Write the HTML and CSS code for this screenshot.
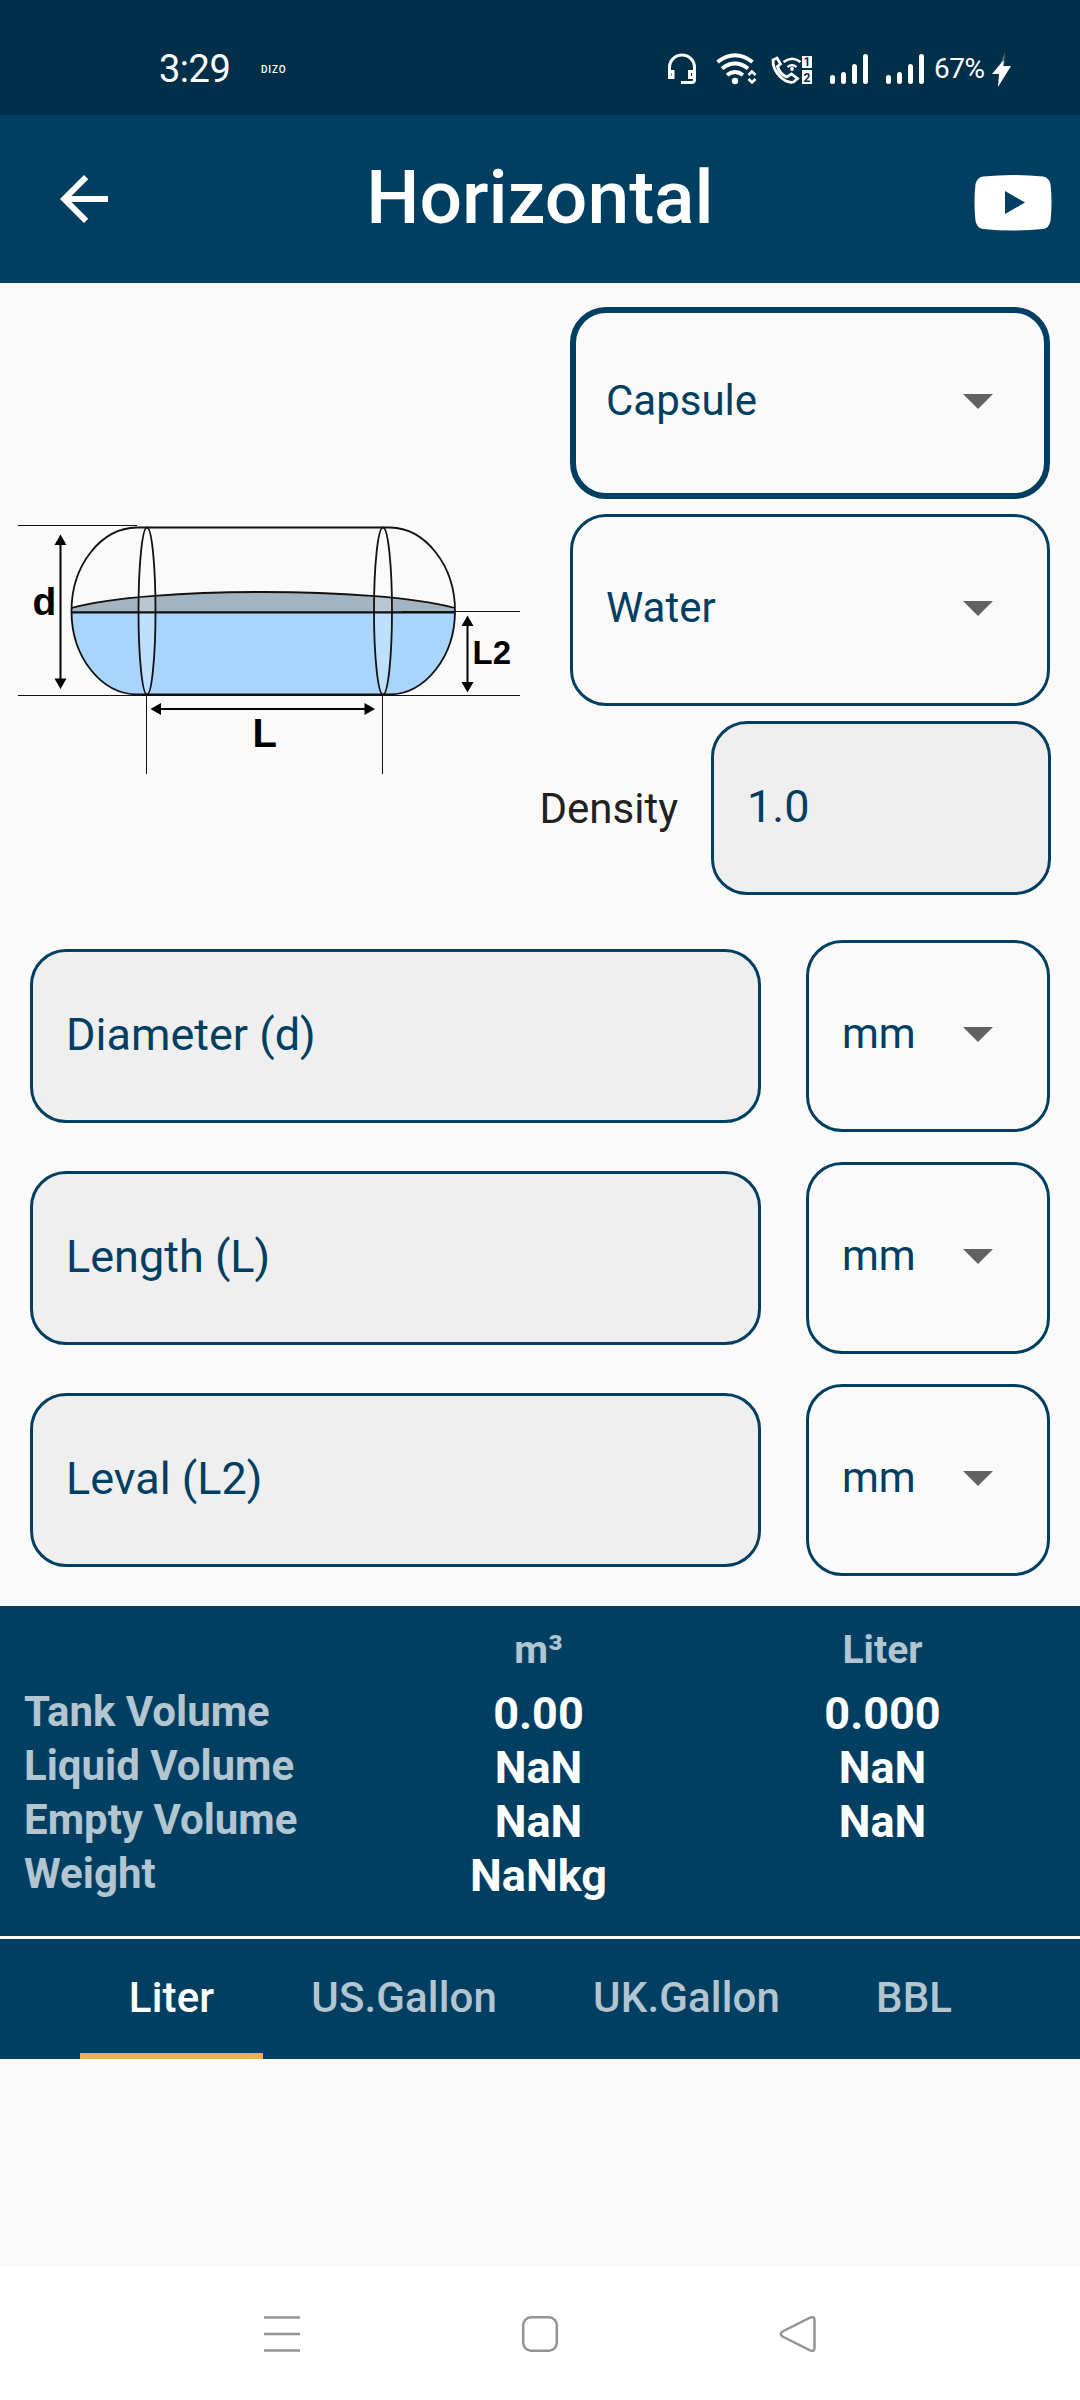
FILE: index.html
```html
<!DOCTYPE html>
<html lang="en">
<head>
    <meta charset="UTF-8">
    <meta name="viewport" content="width=device-width, initial-scale=1.0">
    <title>Horizontal Tank Calculator</title>
    <link rel="stylesheet" href="styles.css">
</head>
<body>
    <div class="status-bar">
        <span class="time">3:29</span>
        <span class="brand">DIZO</span>
        <!-- headset, wifi, call and signal icons -->
        <svg class="status-icons" width="264" height="40" viewBox="664 50 264 40">
            <g fill="none" stroke="#fff" stroke-width="3">
                <path d="M668.5 76V67.500a12.500 12.500 0 0 1 25 0V80q0 2.500-3 2.500H680"/>
                <rect x="668.500" y="71.500" width="3.500" height="6"/>
                <rect x="688.500" y="71.500" width="4" height="6"/>
            </g>
            <g fill="none" stroke="#fff" stroke-width="4">
                <path d="M716.500 62q17.500-13.500 35 0"/>
                <path d="M721 68.500q13-10 26 0"/>
                <path d="M726 75q8-6 16 0"/>
                <path d="M747.500 75l3.500-3.500 3.500 3.500M747.500 79l3.500 3.500 3.500-3.500" stroke-width="2.600"/>
            </g>
            <circle cx="734" cy="81" r="3.200" fill="#fff"/>
            <g fill="none" stroke="#fff" stroke-width="2.800">
                <path d="M772 60l4-2 3.500 6-3 2.500q2 7 9 10.500l5-3 6 4.500-4 3.500q-6 1.500-13-5-8-8-7.500-17z"/>
                <path d="M782.500 62q9-6.500 17 0M786.500 67q4.500-3.500 9 0" stroke-width="2.500"/>
            </g>
            <circle cx="791" cy="69" r="1.900" fill="#fff"/>
            <rect x="801" y="56" width="10" height="12" fill="#fff"/>
            <rect x="801" y="70" width="10" height="14" fill="#fff"/>
            <text x="806" y="66" class="sim">1</text>
            <text x="806" y="81.500" class="sim">2</text>
            <g stroke="#fff" stroke-width="5" stroke-linecap="round">
                <path d="M831.500 77.500V81.500M842.500 74.500V81.500M853.500 66.500V81.500M864.500 56.500V81.500"/>
                <path d="M887.500 77.500V81.500M898.500 74.500V81.500M909.500 66.500V81.500M920.500 56.500V81.500"/>
            </g>
        </svg>
        <span class="battery">67%</span>
        <svg class="bolt" width="20" height="36" viewBox="0 0 20 36">
            <path d="M13 0L8 14H12z" fill="#fff" opacity=".35"/>
            <path d="M10 10L0 22H7L6 35L19 14H11L12 9z" fill="#fff"/>
        </svg>
    </div>

    <div class="app-bar">
        <svg class="back" width="72" height="72" viewBox="0 0 24 24">
            <path d="M20 11H7.830l5.590-5.590L12 4l-8 8 8 8 1.410-1.410L7.830 13H20v-2z" fill="#fff"/>
        </svg>
        <h1>Horizontal</h1>
        <svg class="video" width="78" height="57" viewBox="0 0 78 57">
            <path d="M9 2.500Q39-.5 69 2.500Q75 3.500 76.500 10Q78.500 28 76.500 47Q75 54 69 55Q39 58 9 55Q3 54 1.500 47Q-.5 28 1.500 10Q3 3.500 9 2.500z" fill="#fff"/>
            <path d="M31 17v23l20-11.500z" fill="#003f62"/>
        </svg>
    </div>

    <div class="shape">
        <svg class="tank" width="540" height="260" viewBox="0 520 540 260">
            <path d="M71.500 608C110 597 190 592 263 592S415 597 455 608V612H71.500z" fill="#a2b3c1"/>
            <path d="M71.500 612H455C454 660 425 694 390 694.500H137C101 694 72 660 71.500 612z" fill="#a9d5fd"/>
            <ellipse cx="147" cy="611" rx="8.500" ry="83.500" fill="#fff" fill-opacity=".25"/>
            <ellipse cx="383" cy="611" rx="9" ry="83.500" fill="#fff" fill-opacity=".25"/>
            <g fill="none" stroke="#111" stroke-width="1.800">
                <path d="M137 527.500H390C425 528 455 565 455 611C455 657 425 694 390 694.500H137C101 694 71.500 657 71.500 611C71.500 565 101 528 137 527.500z"/>
                <path d="M71.500 608C110 597 190 592 263 592S415 597 455 608"/>
                <path d="M71.500 612.300H455" stroke-width="2.200"/>
                <ellipse cx="147" cy="611" rx="8.500" ry="83.500"/>
                <ellipse cx="383" cy="611" rx="9" ry="83.500"/>
            </g>
            <!-- dimension lines -->
            <g fill="none" stroke="#111" stroke-width="1">
                <path d="M18 525.500H137M402 611.500H520M18 695.500H520M146.500 695V774M382.500 695V774"/>
            </g>
            <path d="M60.500 540V684M467.500 622V686M156 709H370" stroke="#000" stroke-width="2"/>
            <path d="M60.500 534.500l6 10.500h-12zM60.500 689l6-10.500h-12zM467.500 615.500l6 10.500h-12zM467.500 692.500l6-10.500h-12zM150.500 709l10.500-6v12zM375 709l-10.500-6v12z"/>
            <text x="32.500" y="615" font-size="39">d</text>
            <text x="252.500" y="746.500" font-size="40">L</text>
            <text x="472.500" y="663.500" font-size="33">L2</text>
        </svg>
        <div class="options">
            <div class="select focused"><span>Capsule</span><i class="caret"></i></div>
            <div class="select"><span>Water</span><i class="caret"></i></div>
            <div class="density">
                <label>Density</label>
                <div class="input">1.0</div>
            </div>
        </div>
    </div>

    <div class="fields">
        <div class="field">
            <div class="input">Diameter (d)</div>
            <div class="select"><span>mm</span><i class="caret"></i></div>
        </div>
        <div class="field">
            <div class="input">Length (L)</div>
            <div class="select"><span>mm</span><i class="caret"></i></div>
        </div>
        <div class="field">
            <div class="input">Leval (L2)</div>
            <div class="select"><span>mm</span><i class="caret"></i></div>
        </div>
    </div>

    <div class="results">
        <span></span><span class="unit">m³</span><span class="unit">Liter</span>
        <span class="name">Tank Volume</span><span class="value">0.00</span><span class="value">0.000</span>
        <span class="name">Liquid Volume</span><span class="value">NaN</span><span class="value">NaN</span>
        <span class="name">Empty Volume</span><span class="value">NaN</span><span class="value">NaN</span>
        <span class="name">Weight</span><span class="value">NaNkg</span>
    </div>

    <div class="tabs">
        <span class="tab active">Liter</span>
        <span class="tab">US.Gallon</span>
        <span class="tab">UK.Gallon</span>
        <span class="tab">BBL</span>
    </div>

    <div class="nav-bar">
        <svg width="38" height="38" viewBox="0 0 38 38">
            <path d="M1 2.500H37M1 19H37M1 35.500H37"/>
        </svg>
        <svg width="38" height="38" viewBox="0 0 38 38">
            <rect x="2.200" y="2.200" width="33.600" height="33.600" rx="8"/>
        </svg>
        <svg width="38" height="38" viewBox="0 0 38 38">
            <path d="M3.500 16.500L31 2.600Q35.500 1 35.500 5V33Q35.500 37 31 35.400L3.500 21.500Q0 19 3.500 16.500z"/>
        </svg>
    </div>
</body>
</html>
```
FILE: styles.css
```css
* {
    box-sizing: border-box;
}
body {
    margin: 0;
    width: 1080px;
    height: 2400px;
    display: flex;
    flex-direction: column;
    background-color: #fafafa;
    color: #003f62;
    font-family: Roboto, "Liberation Sans", sans-serif;
}
svg {
    display: block;
    flex: none;
}
.status-bar {
    height: 115px;
    padding: 24px 68px 0 159px;
    display: flex;
    align-items: center;
    background-color: #002f49;
    color: #fff;
}
.time {
    width: 102px;
    padding-bottom: 2px;
    font-size: 38px;
    letter-spacing: -0.5px;
}
.brand {
    flex: 1;
    font-size: 10px;
    font-weight: 500;
    letter-spacing: 0.8px;
}
.status-icons {
    margin-right: 5px;
}
.sim {
    font-size: 12px;
    font-weight: 700;
    fill: #002f49;
    text-anchor: middle;
}
.battery {
    width: 58px;
    padding-bottom: 3px;
    font-family: Roboto, sans-serif;
    font-size: 28px;
    letter-spacing: -0.5px;
}
.app-bar {
    height: 168px;
    padding: 0 28px 0 48px;
    display: flex;
    align-items: center;
    justify-content: space-between;
    background-color: #003f62;
    color: #fff;
}
.app-bar h1 {
    margin: -4px 14px 0 0;
    font-size: 75px;
    font-weight: 500;
}
.video {
    margin-top: 7px;
}
.shape {
    height: 612px;
    padding: 24px 29px 0 0;
    display: flex;
}
.tank {
    margin-top: 213px;
    margin-right: -40px;
    font-family: "Liberation Sans", sans-serif;
    font-weight: 700;
}
.options {
    flex: 1;
    display: flex;
    flex-direction: column;
    align-items: flex-end;
    gap: 15px;
}
.select {
    height: 192px;
    padding: 0 54px 0 33px;
    display: flex;
    align-items: center;
    justify-content: space-between;
    border: 3px solid #003f62;
    border-radius: 36px;
    font-size: 42px;
}
.options .select {
    width: 480px;
    margin-right: 1px;
}
.focused {
    padding: 0 51px 0 30px;
    border-width: 6px;
}
.select span {
    margin-top: -6px;
}
.caret {
    width: 30px;
    height: 15px;
    margin-top: -3px;
    background-color: #616161;
    clip-path: polygon(0 0, 100% 0, 50% 100%);
}
.input {
    height: 174px;
    padding: 0 33px 4px;
    display: flex;
    align-items: center;
    border: 3px solid #003f62;
    border-radius: 36px;
    background-color: #efefef;
    font-size: 45px;
}
.density {
    display: flex;
    align-items: center;
    gap: 33px;
    font-size: 42px;
}
.density label {
    color: #212121;
}
.density .input {
    width: 340px;
    padding-bottom: 3px;
}
.fields {
    height: 711px;
    padding: 45px 30px 0;
    display: flex;
    flex-direction: column;
    gap: 30px;
}
.field {
    display: flex;
    align-items: center;
    justify-content: space-between;
}
.field .input {
    width: 731px;
}
.field .select {
    width: 244px;
}
.results {
    height: 330px;
    padding: 17px 25px 0 24px;
    display: grid;
    grid-template-columns: 343px 343px 345px;
    grid-template-rows: 62px repeat(4, 54px);
    background-color: #003f62;
}
.results span {
    line-height: 54px;
}
.unit {
    color: #b2c5d0;
    font-size: 39px;
    font-weight: 700;
    text-align: center;
}
.name {
    color: #b2c5d0;
    font-size: 42px;
    font-weight: 700;
}
.value {
    padding-top: 2px;
    color: #fff;
    font-size: 45px;
    font-weight: 700;
    text-align: center;
}
.tabs {
    height: 123px;
    display: flex;
    justify-content: center;
    border-top: 3px solid #fafafa;
    background-color: #003f62;
}
.tab {
    padding: 8px 48px 0;
    border-bottom: 6px solid transparent;
    color: #b2c5d0;
    font-size: 42px;
    font-weight: 500;
    line-height: 102px;
    letter-spacing: 0.15px;
}
.tab.active {
    padding: 8px 49px 0;
    border-color: #e9b44c;
    color: #fff;
}
.nav-bar {
    height: 133px;
    margin-top: auto;
    padding: 0 263px;
    display: flex;
    align-items: center;
    justify-content: space-between;
    background-color: #fff;
}
.nav-bar svg {
    fill: none;
    stroke: #949494;
    stroke-width: 2.5;
}
```
